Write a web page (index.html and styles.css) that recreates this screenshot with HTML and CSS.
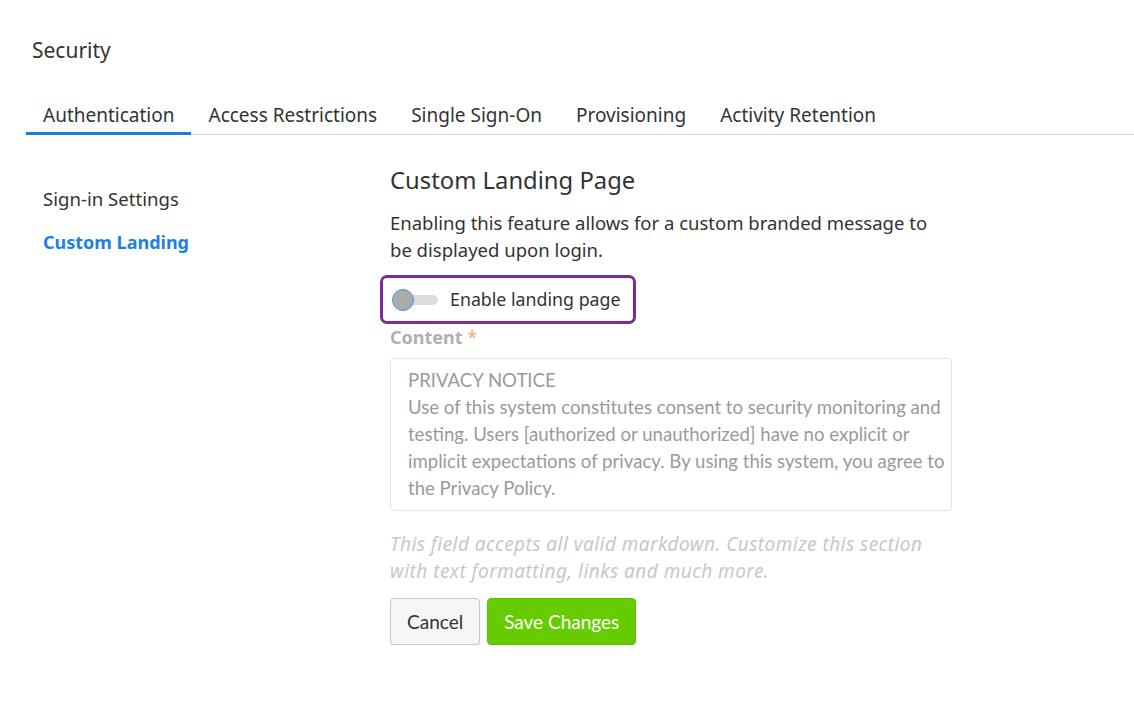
FILE: index.html
```html
<!DOCTYPE html>
<html>
<head>
<meta charset="utf-8">
<link rel="stylesheet" href="styles.css">
</head>
<body>
<div class="page">
  <h1 class="title">Security</h1>
  <nav class="tabs">
    <a class="tab active">Authentication</a>
    <a class="tab">Access Restrictions</a>
    <a class="tab">Single Sign-On</a>
    <a class="tab">Provisioning</a>
    <a class="tab">Activity Retention</a>
  </nav>
  <div class="body">
    <aside class="side">
      <a class="side-link">Sign-in Settings</a>
      <a class="side-link current">Custom Landing</a>
    </aside>
    <main class="main">
      <h2 class="heading">Custom Landing Page</h2>
      <p class="desc">Enabling this feature allows for a custom branded message to be displayed upon login.</p>
      <label class="toggle-box">
        <span class="switch"><span class="track"></span><span class="knob"></span></span>
        <span class="toggle-label">Enable landing page</span>
      </label>
      <div class="field-label">Content <span class="req">*</span></div>
      <div class="textarea">PRIVACY NOTICE<br>Use of this system constitutes consent to security monitoring and testing. Users [authorized or unauthorized] have no explicit or implicit expectations of privacy. By using this system, you agree to the Privacy Policy.</div>
      <p class="hint">This field accepts all valid markdown. Customize this section with text formatting, links and much more.</p>
      <div class="actions">
        <button class="btn cancel">Cancel</button>
        <button class="btn save">Save Changes</button>
      </div>
    </main>
  </div>
</div>
</body>
</html>
```
FILE: styles.css
```css
* { box-sizing: border-box; }
html, body { margin: 0; padding: 0; background: #fff; }
body {
  font-family: "Noto Sans", "Open Sans", sans-serif;
  color: #333;
}
.page { padding: 36px 0 0 26px; }
.title {
  margin: 0 0 0 6px;
  font-size: 21px;
  font-weight: 400;
  line-height: 28px;
  color: #333;
}
.tabs {
  display: flex;
  margin-top: 37px;
  border-bottom: 1px solid #d6d6d6;
}
.tab {
  padding: 0 17px 2px;
  font-size: 19px;
  line-height: 29px;
  color: #333;
  border-bottom: 3px solid transparent;
  margin-bottom: -1px;
}
.tab.active { border-bottom-color: #1a7fd8; }
.body { display: flex; padding-top: 30px; }
.side {
  width: 364px;
  display: flex;
  flex-direction: column;
  gap: 17px;
  padding-left: 17px;
  padding-top: 20px;
}
.side-link { font-size: 18.6px; line-height: 27px; color: #333; }
.side-link.current { color: #1a82e2; font-weight: 700; font-size: 18px; }
.main { width: 580px; }
.heading {
  margin: 0;
  font-size: 23.8px;
  font-weight: 400;
  line-height: 30px;
  color: #333;
}
.desc {
  margin: 14px 0 0;
  font-size: 18.5px;
  line-height: 27px;
  width: 552px;
}
.toggle-box {
  display: inline-flex;
  align-items: center;
  margin: 12px 0 0 -10px;
  height: 49px;
  padding: 0 12px 0 9px;
  border: 3px solid #7b2c96;
  border-radius: 7px;
}
.switch { position: relative; width: 46px; height: 24px; display: inline-block; margin-right: 12px; }
.track {
  position: absolute; left: 4px; top: 7px; width: 42px; height: 10px;
  border-radius: 5px; background: #dcdcdc;
}
.knob {
  position: absolute; left: 0; top: 1px; width: 22px; height: 22px;
  border-radius: 50%; background: #ababab; border: 1.5px solid #3b98ee;
}
.toggle-label { font-size: 17.8px; line-height: 27px; color: #333; }
.field-label {
  margin-top: 0;
  font-size: 18px;
  font-weight: 700;
  line-height: 26px;
  color: #b0b0b0;
}
.req { color: #f4a582; font-weight: 400; }
.textarea {
  margin-top: 8px;
  width: 562px;
  border: 1px solid #e3e3e3;
  border-radius: 4px;
  padding: 8px 4px 8px 17px;
  font-family: Lato, sans-serif;
  font-size: 18.6px;
  line-height: 27px;
  color: #9a9a9a;
}
.hint {
  margin: 20px 0 0;
  font-style: italic;
  font-size: 19px;
  letter-spacing: 0.45px;
  line-height: 27px;
  color: #c8c8c8;
  width: 548px;
}
.actions { display: flex; gap: 7px; margin-top: 13px; }
.btn {
  height: 47px;
  border-radius: 4px;
  font-family: Lato, sans-serif;
  font-size: 19px;
  padding: 0 16px;
  cursor: pointer;
}
.cancel {
  background: #f6f6f6;
  border: 1px solid #c8c8c8;
  color: #333;
  box-shadow: 0 1px 1px rgba(0,0,0,0.15);
}
.save {
  background: #66cc00;
  border: 1px solid #5cbf00;
  color: #fff;
}
```
